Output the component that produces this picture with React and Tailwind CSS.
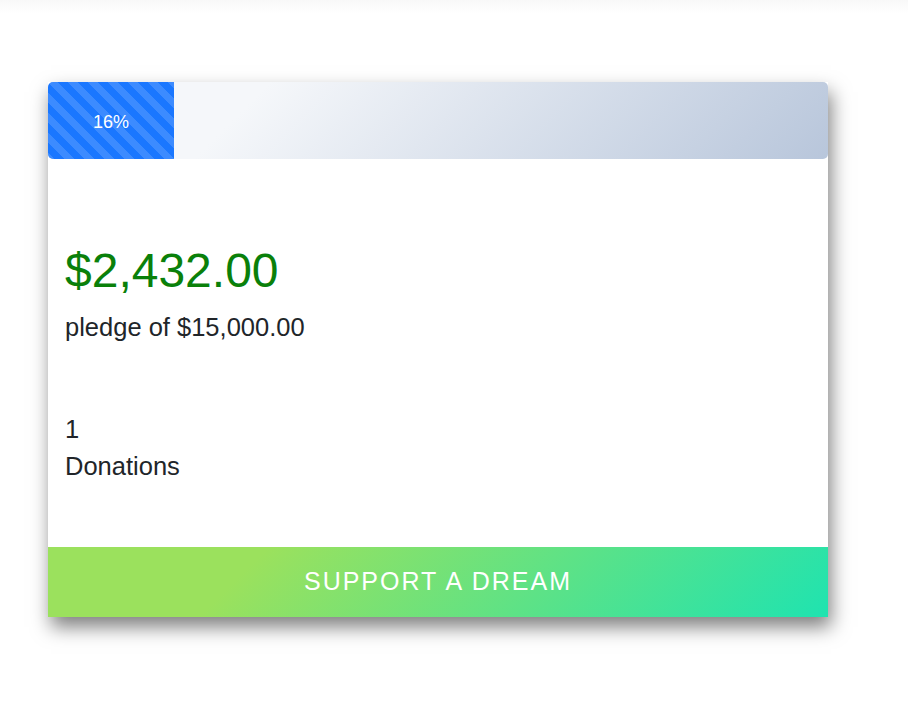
export default function App() {
  return (
    <div className="min-h-[702px] w-[908px] bg-white font-['Liberation_Sans',Arial,sans-serif]">
      <div className="h-[14px] bg-gradient-to-b from-[#f8f8f8] to-white" />
      <div className="ml-[48px] mt-[68px] w-[780px] bg-white shadow-[3px_10px_18px_rgba(0,0,0,0.5)]">
        <div className="flex h-[77px] overflow-hidden rounded-[5px] bg-[linear-gradient(315deg,#b8c6db_0%,#f5f7fa_74%)]">
          <div className="flex h-full w-[126px] items-center justify-center bg-[#1a77ff] bg-[linear-gradient(45deg,rgba(255,255,255,0.15)_25%,transparent_25%,transparent_50%,rgba(255,255,255,0.15)_50%,rgba(255,255,255,0.15)_75%,transparent_75%,transparent)] bg-[length:20px_20px] pt-[3px] text-[18px] text-white">
            16%
          </div>
        </div>
        <div className="px-[17px] pt-[84px] pb-[61.5px] text-[#212529]">
          <div className="mb-[10px] text-[48px] leading-[56px] text-[#0a800a]">$2,432.00</div>
          <div className="text-[25.5px] leading-[37.5px]">pledge of $15,000.00</div>
          <div className="mt-[64px] text-[25.5px] leading-[37.5px]">
            <div>1</div>
            <div>Donations</div>
          </div>
        </div>
        <div className="flex h-[70px] items-center justify-center bg-[linear-gradient(315deg,#1fe3b0_0%,#9be15d_74%)] text-[25px] tracking-[2px] text-white">
          SUPPORT A DREAM
        </div>
      </div>
    </div>
  );
}
